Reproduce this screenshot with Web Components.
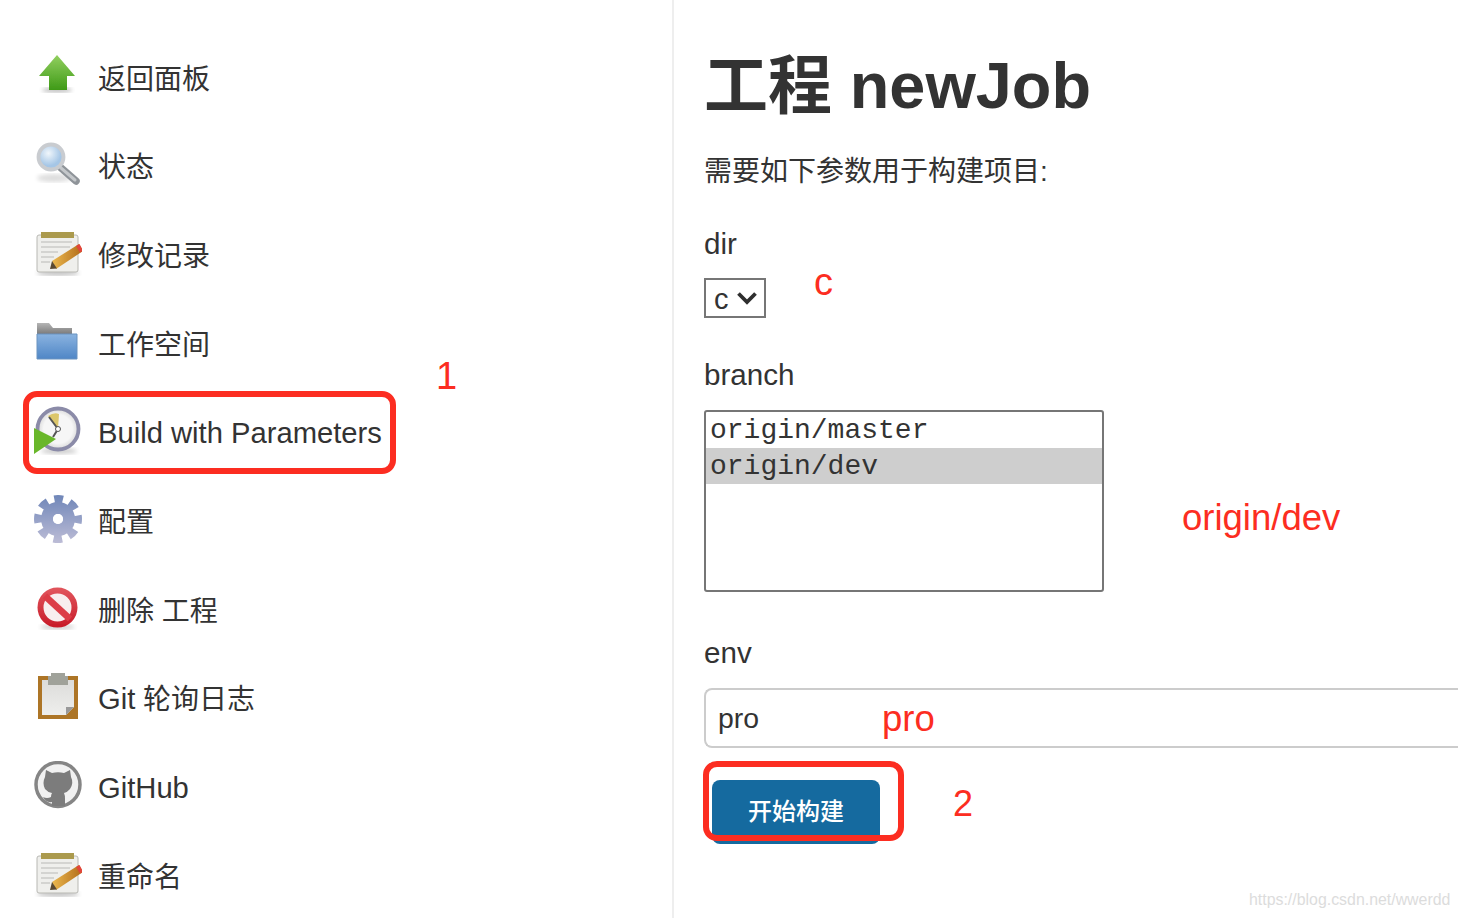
<!DOCTYPE html>
<html lang="zh"><head><meta charset="utf-8"><title>newJob</title>
<style>
html,body{margin:0;padding:0;background:#fff;width:1458px;height:918px;overflow:hidden}
body{font-family:"Liberation Sans","Noto Sans CJK SC",sans-serif;color:#333}
b.big{font-size:64.800px}
</style></head><body>
<template id="t-app"><style>
:host{display:grid;grid-template-columns:674px 1fr;width:1458px;height:918px;position:relative;overflow:hidden}
.side{border-right:2px solid #eee;padding-top:32.500px;height:885px}
.main{padding-left:30px;min-width:0}
</style><div class="side"><slot name="side"></slot></div><div class="main"><slot name="main"></slot></div><slot name="over"></slot></template>

<template id="t-item"><style>
:host{display:flex;align-items:center;height:88.67px;padding-left:34px;font-size:28px;color:#333}
.i{width:48px;height:50px;flex:none;margin-right:16px;display:flex}
.t{white-space:pre}
</style><span class="i"><slot name="icon"></slot></span><span class="t"><slot></slot></span></template>

<template id="t-latin"><style>
:host{display:inline-block;font-size:29.200px;line-height:32px;padding-top:4px;white-space:pre}
:host([flat]){padding-top:0}
</style><slot></slot></template>

<template id="t-main"><style>
:host{display:block;color:#333}
h1{margin:0;font-size:64px;line-height:74px;font-weight:700;padding-top:49px;color:#333;white-space:pre}
p{margin:0;font-size:28px;line-height:40px;padding-top:29px;white-space:pre}
</style><h1><slot name="title"></slot></h1><p><slot name="lead"></slot></p><slot></slot></template>

<template id="t-param"><style>
:host{display:block}
.l{display:block;font-size:29.600px;line-height:40px}
</style><span class="l"><slot name="label"></slot></span><slot></slot></template>

<template id="t-select"><style>
:host{display:flex;align-items:center;box-sizing:border-box;width:62px;height:40px;border:2px solid #767676;font-size:29px;padding:2px 0 0 8px;margin-top:14px;gap:7px;color:#333}
svg{width:22px;height:14px;flex:none;margin-top:-3px}
</style><span><slot></slot></span><svg viewBox="0 0 22 14"><path d="M2.500 2.500 11 11 19.500 2.500" fill="none" stroke="#2f2f2f" stroke-width="3.800"/></svg></template>

<template id="t-list"><style>
:host{display:block;box-sizing:border-box;width:400px;height:182px;border:2px solid #767676;border-radius:3px;margin-top:15px;font-family:"Liberation Mono",monospace;font-size:28px;color:#333}
</style><slot></slot></template>

<template id="t-opt"><style>
:host{display:block;height:36px;line-height:38px;padding-left:4px;white-space:pre}
:host([selected]){background:#cecece}
</style><slot></slot></template>

<template id="t-input"><style>
:host{display:flex;align-items:center;box-sizing:border-box;width:780px;height:60px;border:2px solid #ccc;border-right:0;border-radius:8px 0 0 8px;padding-left:12px;font-size:28.400px;color:#333;margin-top:15px}
</style><slot></slot></template>

<template id="t-btn"><style>
:host{display:flex;align-items:center;justify-content:center;box-sizing:border-box;width:168px;height:64px;padding-bottom:5px;background:#156a9f;border-radius:8px;color:#fff;font-size:24px;font-weight:500;margin:32px 0 0 8px}
</style><slot></slot></template>

<template id="t-box"><style>
:host{display:block;position:absolute;box-sizing:border-box;border:6px solid #fc2d21;border-radius:14px}
</style></template>

<template id="t-note"><style>
:host{display:block;position:absolute;color:#fc2d21;font-size:38px;line-height:44px;white-space:pre}
</style><slot></slot></template>

<script>
for(const [n,t] of [['jk-app','t-app'],['jk-item','t-item'],['jk-latin','t-latin'],['jk-main','t-main'],['jk-param','t-param'],['jk-select','t-select'],['jk-list','t-list'],['jk-opt','t-opt'],['jk-input','t-input'],['jk-btn','t-btn'],['jk-box','t-box'],['jk-note','t-note']]){
 customElements.define(n,class extends HTMLElement{constructor(){super();this.attachShadow({mode:'open'}).append(document.getElementById(t).content.cloneNode(true))}});
}
</script>

<jk-app>
<div slot="side">
<jk-item><svg slot="icon" width="48" height="50" viewBox="0 0 48 50"><defs><linearGradient id="g1" x1="0" y1="0" x2="0" y2="1"><stop offset="0" stop-color="#92d060"/><stop offset="1" stop-color="#3f9a17"/></linearGradient><filter id="b" x="-10%" y="-10%" width="120%" height="120%"><feGaussianBlur stdDeviation=".7"/></filter><filter id="b2"><feGaussianBlur stdDeviation="2"/></filter></defs><ellipse cx="23" cy="38" rx="15" ry="2.500" fill="#bbb" filter="url(#b2)"/><path d="M23 3 41 24H33V38H15V24H5Z" fill="url(#g1)" filter="url(#b)"/></svg>返回面板</jk-item>

<jk-item><svg slot="icon" width="48" height="50" viewBox="0 0 48 50"><defs><radialGradient id="g2" cx=".4" cy=".35"><stop offset="0" stop-color="#f0f6fb"/><stop offset="1" stop-color="#a5c6e6"/></radialGradient></defs><ellipse cx="20" cy="38" rx="17" ry="4" fill="#ddd" filter="url(#b2)"/><g filter="url(#b)"><path d="M26 27 42 41" stroke="#8f9499" stroke-width="7.500" stroke-linecap="round"/><path d="M27 28 41 40" stroke="#c4c7ca" stroke-width="3" stroke-linecap="round"/><circle cx="17" cy="17" r="12.500" fill="url(#g2)" stroke="#c9ccd0" stroke-width="3.800"/></g></svg>状态</jk-item>

<jk-item><svg slot="icon" width="48" height="50" viewBox="0 0 48 50"><defs><linearGradient id="g3" x1="0" y1="0" x2="1" y2="0"><stop offset="0" stop-color="#ecb94f"/><stop offset="1" stop-color="#b06a18"/></linearGradient><g id="note"><ellipse cx="24" cy="44" rx="21" ry="2.500" fill="#bbb" filter="url(#b2)"/><g filter="url(#b)"><rect x="3" y="6" width="41" height="37" rx="2" fill="#efefec" stroke="#b8b8b3" stroke-width="1"/><rect x="7" y="3" width="33" height="6" fill="#ab9a4e"/><path d="M7 13H38M7 18H36M7 23H24M7 28H20M7 33H16" stroke="#cbcbc7" stroke-width="1.600"/><path d="M18 32 45 15 49 22 22 40Z" fill="url(#g3)"/><path d="M42 17 45.500 15 49 21.500 46 23.500Z" fill="#e2453a"/><path d="M16 40 18 32 23 39.500Z" fill="#5a4a32"/></g></g></defs><use href="#note"/></svg>修改记录</jk-item>

<jk-item><svg slot="icon" width="48" height="50" viewBox="0 0 48 50"><defs><linearGradient id="g4" x1="0" y1="0" x2="0" y2="1"><stop offset="0" stop-color="#8ab3e0"/><stop offset="1" stop-color="#4f86c6"/></linearGradient><linearGradient id="g5" x1="0" y1="0" x2="0" y2="1"><stop offset="0" stop-color="#b5b5b5"/><stop offset="1" stop-color="#666"/></linearGradient></defs><g filter="url(#b)"><path d="M3 5H15L19 10H38V20H3Z" fill="url(#g5)"/><path d="M3 16H43V41H3Z" fill="url(#g4)" stroke="#6b93c0" stroke-width="1"/></g></svg>工作空间</jk-item>

<jk-item><svg slot="icon" width="48" height="50" viewBox="0 0 48 50"><defs><radialGradient id="g6"><stop offset=".7" stop-color="#f6f6f6"/><stop offset="1" stop-color="#d8d8d8"/></radialGradient></defs><ellipse cx="25" cy="45" rx="18" ry="3" fill="#ccc" filter="url(#b2)"/><g filter="url(#b)"><circle cx="24" cy="23" r="20.500" fill="url(#g6)" stroke="#8b8ba8" stroke-width="3.800"/><path d="M24 23 14 10Q20 6 25 8Z" fill="#dcc66a"/><path d="M24 23 15 11M24 23 19 31" stroke="#555" stroke-width="2"/><circle cx="24" cy="23" r="2.500" fill="#fff" stroke="#555"/><path d="M0 22 22 33 0 48Z" fill="#69b72c"/></g></svg><jk-latin>Build with Parameters</jk-latin></jk-item>

<jk-item><svg slot="icon" width="48" height="50" viewBox="0 0 48 50"><defs><linearGradient id="g7" gradientUnits="userSpaceOnUse" x1="0" y1="0" x2="0" y2="48"><stop offset="0" stop-color="#6f86b8"/><stop offset="1" stop-color="#bcbcd6"/></linearGradient></defs><g filter="url(#b)" fill="none" stroke="url(#g7)"><circle cx="24" cy="24" r="19.500" stroke-width="9" stroke-dasharray="8.500 6.815" stroke-dashoffset="4.250"/><circle cx="24" cy="24" r="11" stroke-width="12"/></g><circle cx="24" cy="24" r="5" fill="#fff" filter="url(#b)"/></svg>配置</jk-item>

<jk-item><svg slot="icon" width="48" height="50" viewBox="0 0 48 50"><defs><linearGradient id="g9" x1="0" y1="0" x2="0" y2="1"><stop offset="0" stop-color="#e0525a"/><stop offset="1" stop-color="#c91f2c"/></linearGradient></defs><ellipse cx="23.500" cy="43" rx="17" ry="2.500" fill="#ccc" filter="url(#b2)"/><g filter="url(#b)"><circle cx="23.500" cy="23.500" r="17" fill="#f8eeee" stroke="url(#g9)" stroke-width="6"/><path d="M11 12 36 35" stroke="#dc3d46" stroke-width="6.500"/></g></svg>删除 工程</jk-item>

<jk-item><svg slot="icon" width="48" height="50" viewBox="0 0 48 50"><defs><linearGradient id="g8" x1="0" y1="0" x2="0" y2="1"><stop offset="0" stop-color="#dcdcda"/><stop offset="1" stop-color="#eeeeec"/></linearGradient></defs><g filter="url(#b)"><rect x="4" y="4" width="40" height="43" fill="#ad7428"/><path d="M8 8H40V35L32 43H8Z" fill="url(#g8)"/><path d="M32 43 40 35H32Z" fill="#999"/><path d="M17 1H31V4H34V13H14V4H17Z" fill="#a0a29a"/></g></svg><jk-latin flat>Git</jk-latin> 轮询日志</jk-item>

<jk-item><svg slot="icon" width="48" height="50" viewBox="0 0 48 50"><g filter="url(#b)"><circle cx="24" cy="23.500" r="22" fill="#f1f1f1" stroke="#858585" stroke-width="3.500"/><path d="M12 9 18 12Q24 10.500 30 12L36 9 37 16Q40 22 36 28 33 31.500 30 32 31 34 31 38V45H18V41Q12 42 9 36 13 38 17 36 17 33.500 18 32 14 31.500 11 28 8 22 11 16Z" fill="#7b7b7b"/></g></svg><jk-latin>GitHub</jk-latin></jk-item>

<jk-item><svg slot="icon" width="48" height="50" viewBox="0 0 48 50"><use href="#note"/></svg>重命名</jk-item>
</div>

<jk-main slot="main">
<span slot="title">工程 <b class="big">newJob</b></span>
<span slot="lead">需要如下参数用于构建项目:</span>
<jk-param style="margin-top:32px"><span slot="label">dir</span><jk-select>c</jk-select></jk-param>
<jk-param style="margin-top:37px"><span slot="label">branch</span><jk-list><jk-opt>origin/master</jk-opt><jk-opt selected>origin/dev</jk-opt></jk-list></jk-param>
<jk-param style="margin-top:41px"><span slot="label">env</span><jk-input>pro</jk-input></jk-param>
<jk-btn>开始构建</jk-btn>
</jk-main>

<jk-box slot="over" style="left:23px;top:391px;width:373px;height:83px"></jk-box>
<jk-box slot="over" style="left:703px;top:761px;width:201px;height:80px"></jk-box>
<jk-note slot="over" style="left:436px;top:354px">1</jk-note>
<jk-note slot="over" style="left:814px;top:260px">c</jk-note>
<jk-note slot="over" style="left:1182px;top:496px;font-size:36.500px">origin/dev</jk-note>
<jk-note slot="over" style="left:882px;top:697px;font-size:36.500px">pro</jk-note>
<jk-note slot="over" style="left:953px;top:782px;font-size:36px">2</jk-note>
<span slot="over" style="position:absolute;left:1249px;top:890px;font-size:15.900px;line-height:20px;color:#dcdcdc;white-space:pre">https://blog.csdn.net/wwerdd</span>
</jk-app>
</body></html>
